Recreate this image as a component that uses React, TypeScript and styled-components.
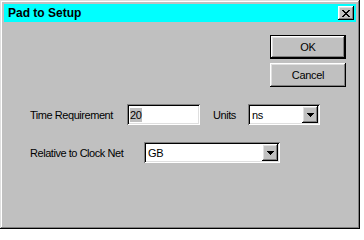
import React from 'react'
import styled, { createGlobalStyle } from 'styled-components'

const GlobalStyle = createGlobalStyle`
  html, body {
    margin: 0;
    padding: 0;
    background: #ffffff;
  }
  body {
    font-family: "Liberation Sans", Arial, sans-serif;
    font-size: 11px;
    color: #000000;
  }
`

const raised = `
  box-shadow:
    inset -1px -1px #000000,
    inset 1px 1px #ffffff,
    inset -2px -2px #808080,
    inset 2px 2px #dfdfdf;
`

const sunken = `
  box-shadow:
    inset 1px 1px #808080,
    inset -1px -1px #ffffff,
    inset 2px 2px #000000,
    inset -2px -2px #dfdfdf;
`

const Window = styled.div`
  width: 360px;
  height: 229px;
  box-sizing: border-box;
  padding: 4px;
  background: #c0c0c0;
  box-shadow:
    inset -1px -1px #000000,
    inset 1px 1px #dfdfdf,
    inset -2px -2px #808080,
    inset 2px 2px #ffffff;
  display: flex;
  flex-direction: column;
`

const TitleBar = styled.div`
  height: 18px;
  display: flex;
  align-items: center;
  justify-content: space-between;
  padding: 0 2px 0 4px;
  background: #00ffff;
`

const TitleText = styled.span`
  font-size: 12px;
  font-weight: 700;
  letter-spacing: 0;
  line-height: 18px;
`

const CloseButton = styled.button`
  width: 16px;
  height: 14px;
  padding: 0;
  border: 0;
  background: #c0c0c0;
  ${raised}
  display: flex;
  align-items: center;
  justify-content: center;
`

const Content = styled.div`
  display: flex;
  flex-direction: column;
  padding-top: 13px;
`

const ButtonStack = styled.div`
  align-self: flex-end;
  margin-right: 10px;
  display: flex;
  flex-direction: column;
  gap: 4px;
`

const PushButton = styled.button<{ $default?: boolean }>`
  width: 76px;
  height: 24px;
  padding: 0;
  box-sizing: border-box;
  background: #c0c0c0;
  font-family: "Liberation Sans", Arial, sans-serif;
  font-size: 11px;
  letter-spacing: -0.3px;
  color: #000000;
  border: ${({ $default }) => ($default ? '1px solid #000000' : '0')};
  ${raised}
`

const Fields = styled.div`
  margin-top: 17px;
  padding-left: 26px;
  display: flex;
  flex-direction: column;
  gap: 17px;
`

const Row = styled.div`
  display: flex;
  align-items: center;
  height: 21px;
`

const Label = styled.span<{ $width: number; $gap?: number }>`
  width: ${({ $width }) => $width}px;
  margin-left: ${({ $gap }) => $gap ?? 0}px;
  flex-shrink: 0;
  letter-spacing: -0.45px;
  white-space: nowrap;
`

const TextBox = styled.div`
  width: 73px;
  height: 21px;
  box-sizing: border-box;
  padding: 2px 2px 2px 3px;
  background: #ffffff;
  ${sunken}
  display: flex;
  align-items: center;
`

const Selected = styled.span`
  background: #c0c0c0;
  line-height: 14px;
  letter-spacing: -0.3px;
`

const Combo = styled.div<{ $width: number }>`
  width: ${({ $width }) => $width}px;
  height: 21px;
  box-sizing: border-box;
  padding: 2px;
  background: #ffffff;
  ${sunken}
  display: flex;
  align-items: stretch;
`

const ComboValue = styled.span`
  flex: 1;
  padding-left: 2px;
  display: flex;
  align-items: center;
  letter-spacing: -0.3px;
`

const ArrowButton = styled.div`
  width: 16px;
  background: #c0c0c0;
  ${raised}
  display: flex;
  align-items: center;
  justify-content: center;
`

const DownArrow = () => (
  <svg width="7" height="4" viewBox="0 0 7 4" shapeRendering="crispEdges">
    <path d="M0 0H7V1H6V2H5V3H4V4H3V3H2V2H1V1H0Z" fill="#000000" />
  </svg>
)

const CloseGlyph = () => (
  <svg width="8" height="7" viewBox="0 0 8 7" shapeRendering="crispEdges">
    <path
      d="M0 0H2V1H3V2H5V1H6V0H8V1H7V2H6V3H5V4H6V5H7V6H8V7H6V6H5V5H3V6H2V7H0V6H1V5H2V4H3V3H2V2H1V1H0Z"
      fill="#000000"
    />
  </svg>
)

export default function App() {
  return (
    <>
      <GlobalStyle />
      <Window>
        <TitleBar>
          <TitleText>Pad to Setup</TitleText>
          <CloseButton aria-label="Close">
            <CloseGlyph />
          </CloseButton>
        </TitleBar>

        <Content>
          <ButtonStack>
            <PushButton $default>OK</PushButton>
            <PushButton>Cancel</PushButton>
          </ButtonStack>

          <Fields>
            <Row>
              <Label $width={97}>Time Requirement</Label>
              <TextBox>
                <Selected>20</Selected>
              </TextBox>
              <Label $width={35} $gap={13}>Units</Label>
              <Combo $width={72}>
                <ComboValue>ns</ComboValue>
                <ArrowButton>
                  <DownArrow />
                </ArrowButton>
              </Combo>
            </Row>
            <Row>
              <Label $width={114}>Relative to Clock Net</Label>
              <Combo $width={136}>
                <ComboValue>GB</ComboValue>
                <ArrowButton>
                  <DownArrow />
                </ArrowButton>
              </Combo>
            </Row>
          </Fields>
        </Content>
      </Window>
    </>
  )
}
